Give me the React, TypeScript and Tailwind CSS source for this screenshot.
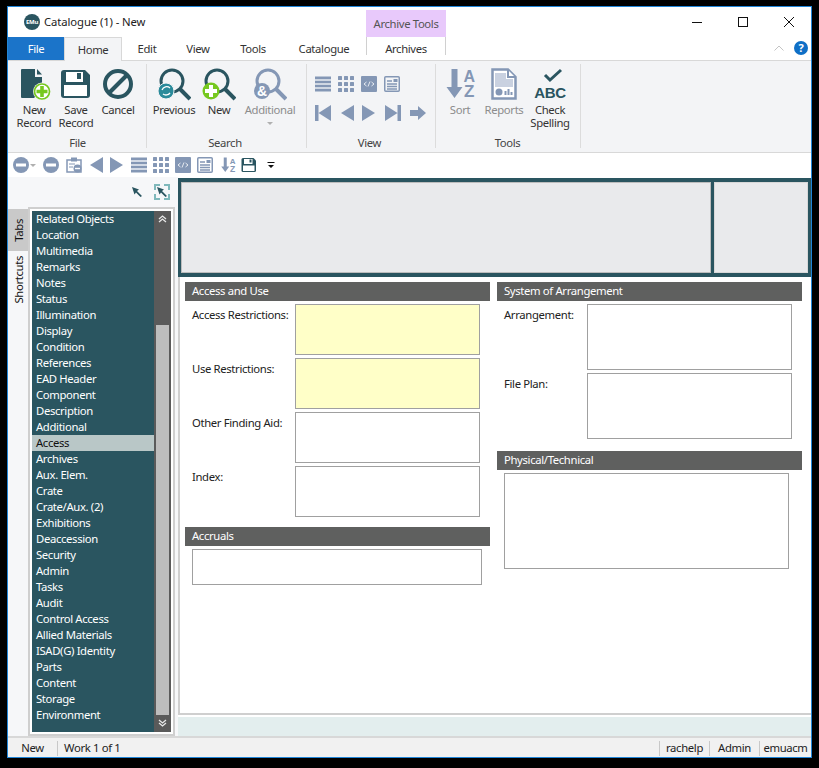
import React from "react";

const TEAL = "#2a5560";
const GREY = "#8497b5";

function NewRecordIcon() {
  return (
    <svg width="32" height="33" viewBox="0 0 32 33" className="ml-[3px]">
      <path d="M1 2 Q1 1 2 1 H15 V9 H22 V22 L14 30 H2 Q1 30 1 29 Z" fill={TEAL} />
      <path d="M17 1 L22 6.5 H17 Z" fill={TEAL} />
      <circle cx="22" cy="23.5" r="9" fill="#f3f4f6" />
      <circle cx="22" cy="23.5" r="7.5" fill="#fff" stroke="#76c81f" strokeWidth="1.7" />
      <path d="M22 18 V29 M16.5 23.5 H27.5" stroke="#76c81f" strokeWidth="3.6" />
    </svg>
  );
}
function SaveIcon({ size = 32, color = TEAL }: { size?: number; color?: string }) {
  return (
    <svg width={size} height={size} viewBox="0 0 32 32">
      <path d="M4 2 H25 L30 7 V27 Q30 30 27 30 H4 Q1 30 1 27 V5 Q1 2 4 2 Z" fill={color} />
      <rect x="6" y="4" width="17" height="10" fill="#fff" />
      <rect x="17" y="5" width="4" height="6" fill={color} />
      <rect x="4" y="17" width="23" height="11" fill="#fff" />
    </svg>
  );
}
function CancelIcon() {
  return (
    <svg width="32" height="32" viewBox="0 0 32 32">
      <circle cx="16" cy="16" r="13" fill="none" stroke={TEAL} strokeWidth="4" />
      <path d="M7 25 L25 7" stroke={TEAL} strokeWidth="4" />
    </svg>
  );
}
function Lens({ color, children }: { color: string; children?: React.ReactNode }) {
  return (
    <svg width="34" height="33" viewBox="0 0 34 33">
      <circle cx="15" cy="13" r="11" fill="none" stroke={color} strokeWidth="3" />
      <path d="M23 21 L33 31" stroke={color} strokeWidth="4" />
      {children}
    </svg>
  );
}
function DownAZ({ size = 32, grey = GREY }: { size?: number; grey?: string }) {
  return (
    <svg width={size} height={size} viewBox="0 0 32 32">
      <path d="M7.5 1 H13.5 V19 H18.5 L10.5 30 L2.5 19 H7.5 Z" fill={grey} />
      <text x="25" y="14" textAnchor="middle" fontSize="16" fontWeight="700" fill={grey} fontFamily="Liberation Sans">A</text>
      <text x="25" y="29" textAnchor="middle" fontSize="17" fontWeight="700" fill={grey} fontFamily="Liberation Sans">Z</text>
    </svg>
  );
}
function Rows({ size = 16, color = GREY }: { size?: number; color?: string }) {
  return (
    <svg width={size} height={size} viewBox="0 0 16 16">
      <path d="M0 2 H16 M0 6 H16 M0 10 H16 M0 14 H16" stroke={color} strokeWidth="3" />
      <path d="M0 4 H16 M0 8 H16 M0 12 H16" stroke="#fff" strokeWidth="0.6" />
    </svg>
  );
}
function Grid9({ size = 16, color = GREY }: { size?: number; color?: string }) {
  const c = [0, 6, 12];
  return (
    <svg width={size} height={size} viewBox="0 0 16 16">
      {c.map((x) => c.map((y) => <rect key={`${x}-${y}`} x={x} y={y} width="4" height="4" rx="0.5" fill={color} />))}
    </svg>
  );
}
function CodeIcon({ color = GREY }: { color?: string }) {
  return (
    <svg width="16" height="16" viewBox="0 0 16 16">
      <rect width="16" height="16" rx="1" fill={color} />
      <path d="M5.5 6 L3 8 L5.5 10 M10.5 6 L13 8 L10.5 10 M9 5.5 L7 10.5" stroke="#fff" strokeWidth="0.8" fill="none" />
    </svg>
  );
}
function FormIcon({ color = GREY }: { color?: string }) {
  return (
    <svg width="16" height="16" viewBox="0 0 16 16">
      <rect x="0.75" y="0.75" width="14.5" height="14.5" rx="1" fill="none" stroke={color} strokeWidth="1.5" />
      <path d="M3 5 H8 M3 8 H13 M3 10.5 H13 M3 13 H13" stroke={color} strokeWidth="1.3" />
      <rect x="9.5" y="3" width="4" height="3" fill={color} />
    </svg>
  );
}
function Tri({ dir, w = 13, h = 16 }: { dir: "l" | "r"; w?: number; h?: number }) {
  return (
    <svg width={w} height={h} viewBox="0 0 13 16">
      <path d={dir === "l" ? "M13 0 V16 L0 8 Z" : "M0 0 V16 L13 8 Z"} fill={GREY} />
    </svg>
  );
}
function Skip({ dir }: { dir: "l" | "r" }) {
  return (
    <svg width="16" height="16" viewBox="0 0 16 16">
      <path d={dir === "l" ? "M0 0 H3.5 V16 H0 Z M16 0 V16 L3.5 8 Z" : "M16 0 H12.5 V16 H16 Z M0 0 V16 L12.5 8 Z"} fill={GREY} />
    </svg>
  );
}
function MinusCircle({ color = GREY }: { color?: string }) {
  return (
    <svg width="16" height="16" viewBox="0 0 16 16">
      <circle cx="8" cy="8" r="8" fill={color} />
      <rect x="3" y="6.5" width="10" height="3" fill="#fff" />
    </svg>
  );
}
function ReportsIcon() {
  return (
    <svg width="26" height="32" viewBox="0 0 26 32">
      <path d="M1.5 1.5 H17 L24.5 9 V30.5 H1.5 Z" fill="#fff" stroke={GREY} strokeWidth="2.5" />
      <path d="M17 2 V9 H24" fill="#fff" stroke={GREY} strokeWidth="2" />
      <rect x="4" y="5" width="11" height="14" fill="#c9d1e0" />
      <rect x="15" y="11" width="7" height="8" fill="#c9d1e0" />
      <circle cx="8" cy="24" r="3.5" fill={GREY} />
      <path d="M14.5 27 V23 M17.5 27 V21 M20.5 27 V24" stroke={GREY} strokeWidth="2" />
    </svg>
  );
}
function SpellIcon() {
  return (
    <svg width="32" height="32" viewBox="0 0 32 32">
      <path d="M11 7 L16 12 L27 2" fill="none" stroke={TEAL} strokeWidth="3" />
      <text x="16" y="30" textAnchor="middle" fontSize="15" fontWeight="700" fill={TEAL} fontFamily="Liberation Sans">ABC</text>
    </svg>
  );
}

function RibbonBtn({ w, icon, label, disabled, chevron }: { w: number; icon: React.ReactNode; label: React.ReactNode; disabled?: boolean; chevron?: boolean }) {
  return (
    <div className={`flex flex-col items-center ${disabled ? "text-[#8c8c8c]" : "text-[#333]"}`} style={{ width: w }}>
      <div className="h-[35px] flex items-start justify-center">{icon}</div>
      <div className="text-center leading-[13px]">{label}</div>
      {chevron && <div className="w-0 h-0 mt-[6px] border-x-[3px] border-x-transparent border-t-[3px] border-t-[#b0b0b0]" />}
    </div>
  );
}
function Group({ w, label, children, pl, shift = 0 }: { w: number; label: string; children: React.ReactNode; pl?: number; shift?: number }) {
  return (
    <div className="relative flex flex-col h-[91px]" style={{ width: w, paddingLeft: pl }}>
      <div className="flex flex-1 pt-[7px]">{children}</div>
      <div className="text-center text-[#444] leading-[13px] mb-[3px]" style={{ marginLeft: pl ? -pl : 0, paddingRight: shift }}>{label}</div>
      <div className="absolute right-0 top-[3px] bottom-[4px] w-px bg-[#dcdcdc]" />
    </div>
  );
}

const tabs = [
  ["Edit", 50],
  ["View", 52],
  ["Tools", 58],
  ["Catalogue", 84],
] as const;

const items = ["Related Objects","Location","Multimedia","Remarks","Notes","Status","Illumination","Display","Condition","References","EAD Header","Component","Description","Additional","Access","Archives","Aux. Elem.","Crate","Crate/Aux. (2)","Exhibitions","Deaccession","Security","Admin","Tasks","Audit","Control Access","Allied Materials","ISAD(G) Identity","Parts","Content","Storage","Environment"];

function Section({ title, children, className = "" }: { title: string; children: React.ReactNode; className?: string }) {
  return (
    <section className={className}>
      <div className="h-[19px] bg-[#5f605f] text-white pl-[7px] leading-[18px]">{title}</div>
      {children}
    </section>
  );
}
function Field({ label, h, color = "bg-white", labelW, inputW }: { label: string; h: number; color?: string; labelW: number; inputW: number }) {
  return (
    <div className="flex mb-[3px]">
      <div className="pl-[7px] pt-[3px] text-[#222] leading-[15px]" style={{ width: labelW }}>{label}</div>
      <div className={`border border-[#a0a0a0] ${color}`} style={{ width: inputW, height: h }} />
    </div>
  );
}

export default function App() {
  return (
    <div className="w-[819px] h-[768px] bg-black pt-[6px] pl-[7px] text-[11.3px] tracking-[-0.35px] font-['Noto_Sans',sans-serif] overflow-hidden">
      <div className="w-[805px] h-[752px] border border-[#2186d8] bg-white flex flex-col">
        {/* title bar */}
        <div className="h-[30px] flex shrink-0">
          <div className="w-[358px] flex items-center">
            <div className="ml-[16px] w-[16px] h-[16px] rounded-full bg-[#2a5560] text-white text-[6px] font-bold flex items-center justify-center leading-none">EMu</div>
            <div className="ml-[4px] text-[#222] tracking-[-0.1px]">Catalogue (1) - New</div>
          </div>
          <div className="w-[80px] mt-[3px] bg-[#e8c9fb] text-[#555] text-center leading-[27px]">Archive Tools</div>
          <div className="ml-auto flex items-center">
            <svg width="12" height="12" viewBox="0 0 12 12" className="mr-[34px]"><path d="M1 6.5 H11" stroke="#111" strokeWidth="1" /></svg>
            <svg width="12" height="12" viewBox="0 0 12 12" className="mr-[34px]"><rect x="1.5" y="1.5" width="9" height="9" fill="none" stroke="#111" /></svg>
            <svg width="12" height="12" viewBox="0 0 12 12" className="mr-[16px]"><path d="M1 1 L11 11 M11 1 L1 11" stroke="#111" strokeWidth="1" /></svg>
          </div>
        </div>
        {/* tabs */}
        <div className="h-[24px] flex shrink-0 border-b border-[#d8d8d8] text-[#333]">
          <div className="w-[56px] h-[23px] bg-[#1b74c9] text-white text-center leading-[24px]">File</div>
          <div className="w-[58px] h-[24px] bg-[#f3f4f6] border-x border-t border-[#d8d8d8] text-center leading-[24px]">Home</div>
          {tabs.map(([t, w]) => (
            <div key={t} className="text-center leading-[24px]" style={{ width: w }}>{t}</div>
          ))}
          <div className="w-[80px] h-[18px] border-x border-[#d0d0d0] text-center leading-[24px]">Archives</div>
          <div className="ml-auto flex items-center pr-[3px] pb-[2px]">
            <svg width="12" height="8" viewBox="0 0 12 8" className="mr-[9px]"><path d="M1.5 6.5 L6 2 L10.5 6.5" fill="none" stroke="#c4c4c4" /></svg>
            <div className="w-[14px] h-[14px] rounded-full bg-[#0f6fc6] text-white text-[11px] font-bold text-center leading-[14px]">?</div>
          </div>
        </div>
        {/* ribbon */}
        <div className="h-[92px] bg-[#f3f4f6] border-b border-[#d8d8d8] flex shrink-0">
          <Group w={139} label="File" pl={5}>
            <RibbonBtn w={42} icon={<NewRecordIcon />} label={<>New<br />Record</>} />
            <RibbonBtn w={42} icon={<SaveIcon />} label={<>Save<br />Record</>} />
            <RibbonBtn w={42} icon={<CancelIcon />} label="Cancel" />
          </Group>
          <Group w={160} label="Search" pl={4} shift={4}>
            <RibbonBtn w={46} label="Previous" icon={
              <Lens color={TEAL}><circle cx="9" cy="23" r="8" fill="#2a8a9a" stroke="#f3f4f6" /><path d="M5 22 A5 5 0 0 1 13 20 M13 25 A5 5 0 0 1 6 26" stroke="#fff" strokeWidth="1.3" fill="none" /></Lens>
            } />
            <RibbonBtn w={44} label="New" icon={
              <Lens color={TEAL}><circle cx="9" cy="23" r="8.5" fill="#76c81f" /><path d="M9 17 V29 M3 23 H15" stroke="#fff" strokeWidth="4" /></Lens>
            } />
            <RibbonBtn w={58} label="Additional" disabled chevron icon={
              <Lens color={GREY}><circle cx="9" cy="23" r="8" fill={GREY} /><text x="9" y="28" textAnchor="middle" fontSize="14" fontWeight="700" fill="#fff" fontFamily="Liberation Sans">&amp;</text></Lens>
            } />
          </Group>
          <Group w={129} label="View" shift={4}>
            <div className="pl-[8px] pt-[8px] flex flex-col gap-[13px]">
              <div className="flex gap-[7px]"><Rows /><Grid9 /><CodeIcon /><FormIcon /></div>
              <div className="flex items-center">
                <Skip dir="l" /><div className="ml-[10px]"><Tri dir="l" /></div><div className="ml-[8px]"><Tri dir="r" /></div><div className="ml-[10px]"><Skip dir="r" /></div>
                <svg width="16" height="16" viewBox="0 0 16 16" className="ml-[9px]"><path d="M0 5 H8 V1 L16 8 L8 15 V11 H0 Z" fill={GREY} /></svg>
              </div>
            </div>
          </Group>
          <Group w={145} label="Tools" pl={2} shift={2}>
            <RibbonBtn w={44} label="Sort" disabled icon={<DownAZ />} />
            <RibbonBtn w={44} label="Reports" disabled icon={<ReportsIcon />} />
            <RibbonBtn w={48} label={<>Check<br />Spelling</>} icon={<SpellIcon />} />
          </Group>
        </div>
        {/* quick access */}
        <div className="h-[24px] flex items-center shrink-0 pl-[5px]">
          <MinusCircle />
          <div className="ml-[1px] mr-[7px] w-0 h-0 border-x-[3px] border-x-transparent border-t-[3px] border-t-[#b0b0b0]" />
          <MinusCircle />
          <svg width="16" height="16" viewBox="0 0 16 16" className="ml-[7px]"><path d="M1 3 H15 V15 H1 Z" fill="#fff" stroke={GREY} strokeWidth="1.5" /><rect x="5" y="0.5" width="6" height="4" fill={GREY} /><circle cx="11.5" cy="11.5" r="4" fill={GREY} /><rect x="9" y="10.8" width="5" height="1.4" fill="#fff" /><path d="M3 7 H9 M3 10 H7" stroke={GREY} /></svg>
          <div className="ml-[8px]"><Tri dir="l" /></div>
          <div className="ml-[7px]"><Tri dir="r" /></div>
          <div className="ml-[8px]"><Rows /></div>
          <div className="ml-[6px]"><Grid9 /></div>
          <div className="ml-[6px]"><CodeIcon /></div>
          <div className="ml-[6px]"><FormIcon /></div>
          <div className="ml-[7px]"><DownAZ size={16} /></div>
          <div className="ml-[5px]"><SaveIcon size={16} /></div>
          <svg width="8" height="8" viewBox="0 0 8 8" className="ml-[10px]"><path d="M0.5 1 H7.5 V2 H0.5 Z M1 4 H7 L4 7 Z" fill="#111" /></svg>
        </div>
        {/* main */}
        <div className="flex-1 flex min-h-0">
          {/* left */}
          <div className="w-[170px] bg-[#f6f7f9] flex flex-col shrink-0">
            <div className="h-[30px] flex items-center justify-end pr-[8px] shrink-0">
              <svg width="12" height="12" viewBox="0 0 12 12" className="mr-[11px]"><path d="M1 1 L8 3.5 L6 5 L11 10 L9.5 11 L5 6.5 L3.5 8.5 Z" fill={TEAL} /></svg>
              <div className="w-[16px] h-[16px] border-2 border-dashed border-[#7fb8bb] flex items-center justify-center">
                <svg width="12" height="12" viewBox="0 0 12 12"><path d="M1 1 L8 3.5 L6 5 L11 10 L9.5 11 L5 6.5 L3.5 8.5 Z" fill={TEAL} /></svg>
              </div>
            </div>
            <div className="flex-1 flex min-h-0">
              <div className="w-[20px] pt-[2px] shrink-0 flex flex-col">
                <div className="h-[42px] pl-[3px] bg-[#c9c9c9] flex items-center justify-center text-[#111]"><span className="[writing-mode:vertical-rl] rotate-180">Tabs</span></div>
                <div className="h-[58px] pl-[3px] flex items-center justify-center text-[#111]"><span className="[writing-mode:vertical-rl] rotate-180">Shortcuts</span></div>
              </div>
              <div className="w-[147px] h-[529px] bg-white border-2 border-[#cfcfcf] p-[2px]">
                <div className="h-full bg-[#2a5560] flex">
                  <div className="w-[122px] text-white">
                    {items.map((t) => (
                      <div key={t} className={`h-[16px] leading-[16px] pl-[4px] ${t === "Access" ? "bg-[#b9c7c7] text-[#111]" : ""}`}>{t}</div>
                    ))}
                  </div>
                  <div className="w-[17px] bg-[#5a5a5a] flex flex-col items-center">
                    <svg width="9" height="8" viewBox="0 0 9 8" className="mt-[4px] mb-[102px] shrink-0"><path d="M1 4 L4.5 1 L8 4 M1 7 L4.5 4 L8 7" stroke="#e8e8e8" strokeWidth="1.3" fill="none" /></svg>
                    <div className="w-[13px] h-[390px] bg-[#bdbdbd] shrink-0" />
                    <svg width="9" height="8" viewBox="0 0 9 8" className="mt-[4px] shrink-0"><path d="M1 1 L4.5 4 L8 1 M1 4 L4.5 7 L8 4" stroke="#e8e8e8" strokeWidth="1.3" fill="none" /></svg>
                  </div>
                </div>
              </div>
            </div>
          </div>
          {/* right */}
          <div className="flex-1 flex flex-col min-w-0">
            <div className="mt-[1px] h-[99px] bg-[#2a5560] py-[4px] px-[3px] flex gap-[3px] shrink-0">
              <div className="w-[530px] bg-[#e9eaec] border border-[#bdbdbd]" />
              <div className="flex-1 bg-[#e9eaec] border border-[#d8d8d8]" />
            </div>
            <div className="h-[438px] border-l-2 border-[#cfcfcf] border-b-2 flex gap-[7px] pl-[5px] pt-[5px]">
              <div className="w-[305px]">
                <Section title="Access and Use">
                  <div className="pt-[3px]">
                    <Field label="Access Restrictions:" h={51} color="bg-[#ffffc8]" labelW={110} inputW={185} />
                    <Field label="Use Restrictions:" h={51} color="bg-[#ffffc8]" labelW={110} inputW={185} />
                    <Field label="Other Finding Aid:" h={51} labelW={110} inputW={185} />
                    <Field label="Index:" h={51} labelW={110} inputW={185} />
                  </div>
                </Section>
                <Section title="Accruals" className="mt-[10px]">
                  <div className="pt-[3px] pl-[7px]"><div className="w-[290px] h-[36px] border border-[#a0a0a0]" /></div>
                </Section>
              </div>
              <div className="w-[305px]">
                <Section title="System of Arrangement">
                  <div className="pt-[3px]">
                    <Field label="Arrangement:" h={66} labelW={90} inputW={205} />
                    <Field label="File Plan:" h={66} labelW={90} inputW={205} />
                  </div>
                </Section>
                <Section title="Physical/Technical" className="mt-[12px]">
                  <div className="pt-[3px] pl-[7px]"><div className="w-[285px] h-[96px] border border-[#a0a0a0]" /></div>
                </Section>
              </div>
            </div>
            <div className="mt-[2px] flex-1 bg-[#e3eeee]" />
          </div>
        </div>
        {/* status */}
        <div className="h-[21px] pt-[1px] bg-[#f1f1f1] border-t-2 border-[#d8d8d8] flex items-center text-[#222] shrink-0">
          <div className="w-[49px] text-center">New</div>
          <div className="h-[15px] w-px bg-[#c8c8c8]" />
          <div className="pl-[6px]">Work 1 of 1</div>
          <div className="ml-auto flex items-center">
            <div className="h-[15px] w-px bg-[#c8c8c8]" />
            <div className="w-[49px] text-center">rachelp</div>
            <div className="h-[15px] w-px bg-[#c8c8c8]" />
            <div className="w-[49px] text-center">Admin</div>
            <div className="h-[15px] w-px bg-[#c8c8c8]" />
            <div className="w-[51px] text-center">emuacm</div>
          </div>
        </div>
      </div>
    </div>
  );
}
